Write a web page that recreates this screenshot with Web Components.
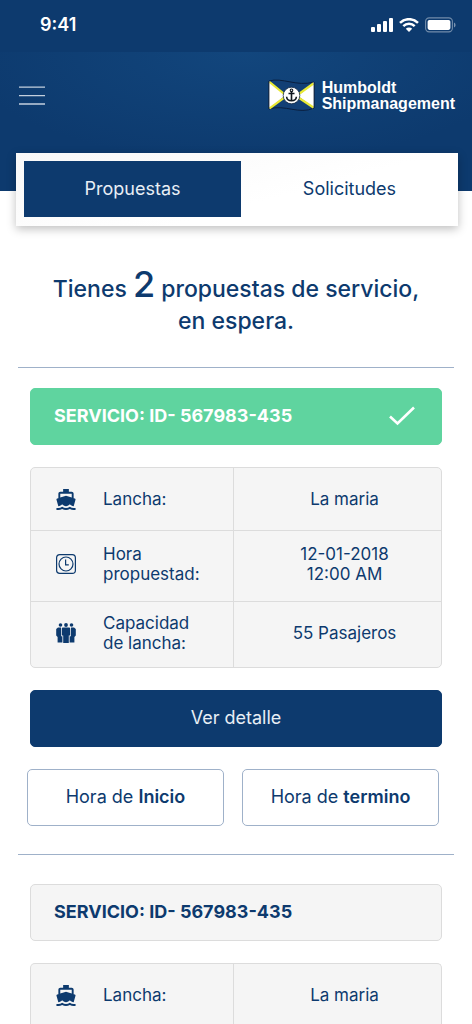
<!DOCTYPE html>
<html lang="es">
<head>
<meta charset="utf-8">
<meta name="viewport" content="width=device-width, initial-scale=1">
<title>Humboldt Shipmanagement</title>
<style>
  :root {
    --navy: #0d3a6e;
    --green: #5fd49f;
    --panel: #f5f5f5;
    --line: #dcdcdc;
    --outline: #9fb1c9;
  }
  html { height: 100%; overflow: hidden; }
  body {
    margin: 0;
    background: #fff;
    color: var(--navy);
    font: 18px/20px Inter, "Noto Sans", sans-serif;
  }
</style>
</head>
<body>
<service-app>
  <status-bar slot="top" time="9:41"></status-bar>
  <app-header slot="top"></app-header>
  <tab-switch>
    <tab-button selected>Propuestas</tab-button>
    <tab-button>Solicitudes</tab-button>
  </tab-switch>
  <pending-title count="2"></pending-title>
  <service-card>
    <service-id code="567983-435" accepted></service-id>
    <service-details lancha="La maria" hora="12-01-2018|12:00 AM" capacidad="55 Pasajeros"></service-details>
    <action-button primary>Ver detalle</action-button>
    <button-pair>
      <action-button>Hora de <b>Inicio</b></action-button>
      <action-button>Hora de <b>termino</b></action-button>
    </button-pair>
  </service-card>
  <service-card roomy>
    <service-id code="567983-435"></service-id>
    <service-details lancha="La maria" continued></service-details>
  </service-card>
</service-app>

<script>
  const define = (name, html, setup) => {
    const template = document.createElement('template');
    template.innerHTML = html;
    customElements.define(name, class extends HTMLElement {
      constructor() {
        super();
        this.attachShadow({ mode: 'open' }).append(template.content.cloneNode(true));
      }
      connectedCallback() {
        if (setup) setup(this, this.shadowRoot);
      }
    });
  };

  define('service-app', `
    <style>
      :host { display: block; }
      .top {
        background: radial-gradient(ellipse 60% 110px at 52% 0, #12467d, transparent) 0 52px no-repeat, var(--navy);
        height: 191px;
        margin-bottom: -38px;
      }
    </style>
    <div class="top"><slot name="top"></slot></div>
    <main><slot></slot></main>`);

  define('status-bar', `
    <style>
      :host {
        display: flex; justify-content: space-between; align-items: center;
        box-sizing: border-box; height: 52px; padding: 0 16px 2px 40px; color: #fff;
        font: 600 18px/20px Inter, sans-serif;
      }
      .signs { display: flex; align-items: center; gap: 6px; }
      svg { display: block; }
    </style>
    <span class="time"></span>
    <span class="signs">
      <svg width="22" height="14" viewBox="0 0 22 14" fill="#fff"><rect y="9" width="4" height="5" rx="1"/><rect x="6" y="6" width="4" height="8" rx="1"/><rect x="12" y="3" width="4" height="11" rx="1"/><rect x="18" width="4" height="14" rx="1"/></svg>
      <svg width="20" height="14" viewBox="0 0 20 14" fill="none" stroke="#fff" stroke-width="2.5"><path d="M1 4.9a12.7 12.7 0 0 1 18 0M4.3 8.2a8.1 8.1 0 0 1 11.4 0"/><path d="M6.8 10.8a4.6 4.6 0 0 1 6.4 0L10 14z" fill="#fff" stroke="none"/></svg>
      <svg width="31" height="16" viewBox="0 0 31 16"><rect x=".6" y=".9" width="26.8" height="14" rx="3.6" fill="none" stroke="#fff" stroke-opacity=".42" stroke-width="1.1"/><rect x="2.6" y="2.9" width="22.8" height="10" rx="1.8" fill="#fff"/><path d="M29 5.4v5q1.6-.8 1.6-2.5T29 5.4z" fill="#fff" opacity=".45"/></svg>
    </span>`,
    (host, root) => { root.querySelector('.time').textContent = host.getAttribute('time'); });

  define('app-header', `
    <style>
      :host { display: flex; justify-content: space-between; align-items: center; height: 88px; padding: 0 17px 0 19px; }
      button { width: 26px; height: 20px; padding: 0; border: 0; background: none; }
      svg { display: block; }
    </style>
    <button type="button" aria-label="Menú"><svg width="26" height="20" viewBox="0 0 26 20" stroke="#c3cfde" stroke-width="1.3"><path d="M0 1.2h26M0 9.6h26M0 18h26"/></svg></button>
    <brand-logo></brand-logo>`);

  define('brand-logo', `
    <style>
      :host { display: flex; align-items: center; gap: 7px; color: #fff; font: bold 16px/16px "Liberation Sans", Arial, sans-serif; }
      svg { display: block; }
      a { color: inherit; text-decoration: none; }
    </style>
    <svg width="47" height="34" viewBox="0 0 47 34">
      <path d="M1 2C14-2 29 8 46 3v26C31 36 17 25 1 30z" fill="#123f75" stroke="#0a1f3f"/>
      <path d="M1 2l16 14.500L1 30z" fill="#fff"/><path d="M46 3L30 17l16 12z" fill="#fff"/>
      <path d="M1.600 3l17 14L1.600 29.300M45.400 4.500L28 17l17.400 11.500" fill="none" stroke="#e9e934" stroke-width="2.200"/>
      <path d="M1 2v28M46 3v26" stroke="#1a2940" stroke-width=".8"/>
      <circle cx="23.500" cy="16.500" r="8.300" fill="#fff" stroke="#172b44" stroke-width=".8"/>
      <circle cx="23.500" cy="11.300" r="1.300" fill="none" stroke="#101820" stroke-width="1.100"/>
      <path d="M23.500 12.500v9.500M20.500 14.500h6M18.600 17.800c.4 5.300 9.400 5.300 9.800 0" fill="none" stroke="#101820" stroke-width="1.600"/>
    </svg>
    <a href="#">Humboldt<br>Shipmanagement</a>`);

  define('tab-switch', `
    <style>
      :host {
        display: grid; grid-template-columns: 1fr 1fr; position: relative;
        margin: 0 14px 0 16px; padding: 8px 0 9px 8px;
        background: linear-gradient(165deg, #f8f8f8, #fff 60%);
        box-shadow: 0 3px 9px rgba(0, 0, 0, .25);
      }
    </style>
    <slot></slot>`);

  define('tab-button', `
    <style>
      :host { display: block; }
      button { display: block; width: 100%; height: 56px; padding: 0; border: 0; background: none; color: var(--navy); font: inherit; }
      :host([selected]) button { background: var(--navy); color: #e8eef5; }
    </style>
    <button type="button"><slot></slot></button>`);

  define('pending-title', `
    <style>
      :host { display: block; padding: 42px 16px 2px; }
      h1 { margin: 0; font-size: 23px; line-height: 32px; font-weight: 500; text-align: center; }
      strong { font-size: 36px; line-height: 32px; font-weight: 500; }
    </style>
    <h1>Tienes <strong></strong> propuestas de servicio,<br>en espera.</h1>`,
    (host, root) => { root.querySelector('strong').textContent = host.getAttribute('count'); });

  define('service-card', `
    <style>
      :host { display: block; margin: 28px 18px 0; }
      hr { margin: 0; border: 0; border-top: 1px solid var(--outline); }
      .body { display: grid; gap: 22px; padding: 20px 12px 0; }
      :host([roomy]) .body { padding-top: 29px; }
    </style>
    <hr><section class="body"><slot></slot></section>`);

  define('service-id', `
    <style>
      :host { display: block; }
      h2 {
        display: flex; justify-content: space-between; align-items: center;
        box-sizing: border-box; height: 57px; margin: 0; padding: 0 26px 2px 23px;
        border: 1px solid var(--line); border-radius: 5px; background: var(--panel);
        font-size: 18px; line-height: 20px; font-weight: 700;
      }
      svg { display: none; }
      :host([accepted]) h2 { border-color: var(--green); background: var(--green); color: #fff; }
      :host([accepted]) svg { display: block; }
    </style>
    <h2><span></span><svg width="26" height="20" viewBox="0 0 26 20" fill="none" stroke="#fff" stroke-width="2.600"><path d="M1 10.500l7.500 7L25 1.500"/></svg></h2>`,
    (host, root) => { root.querySelector('span').textContent = 'SERVICIO: ID- ' + host.getAttribute('code'); });

  const icons = {
    boat: '<svg width="20" height="21" viewBox="2 1 20 22" fill="currentColor"><path d="M20 21c-1.390 0-2.780-.470-4-1.320-2.440 1.710-5.560 1.710-8 0C6.780 20.530 5.390 21 4 21H2v2h2c1.380 0 2.740-.350 4-.990 2.520 1.290 5.480 1.290 8 0 1.260.650 2.620.990 4 .990h2v-2h-2zM3.950 19H4c1.600 0 3.020-.880 4-2 .980 1.120 2.400 2 4 2s3.020-.880 4-2c.980 1.120 2.400 2 4 2h.050l1.890-6.680c.080-.260.060-.540-.060-.780s-.340-.420-.600-.500L20 10.620V6c0-1.100-.900-2-2-2h-3V1H9v3H6c-1.100 0-2 .900-2 2v4.620l-1.290.420c-.260.080-.480.260-.600.500s-.150.520-.060.780L3.950 19zM6 6h12v3.970L12 8 6 9.970V6z"/></svg>',
    clock: '<svg width="20" height="20" viewBox="0 0 20 20" fill="none" stroke="currentColor" stroke-width="1.200"><rect x=".6" y=".6" width="18.800" height="18.800" rx="3.200"/><circle cx="10" cy="10" r="7"/><path d="M9.600 5.600v5.200h3.200"/></svg>',
    people: '<svg width="20" height="20" viewBox="0 0 20 20" fill="currentColor"><circle cx="4.500" cy="2" r="1.800"/><circle cx="10" cy="2" r="1.900"/><circle cx="15.500" cy="2" r="1.800"/><path d="M7 4.400h6q1.200 0 1.200 1.200v7h-1.400V20H7.200v-7.400H5.800v-7Q5.800 4.400 7 4.400z"/><path d="M5 4.400H2L.2 6v6.600L1.600 14v5.400h4.800v-6.200H5.100zM15 4.400h3L19.800 6v6.600L18.400 14v5.400h-4.800v-6.200h1.300z"/></svg>'
  };

  define('service-details', `
    <style>
      :host { display: block; font-size: 17px; }
      table {
        width: 100%; table-layout: fixed; border-collapse: separate; border-spacing: 0;
        border: 1px solid var(--line); border-radius: 5px; background: var(--panel);
      }
      :host([continued]) table { border-radius: 5px 5px 0 0; border-bottom: 0; }
      th, td { box-sizing: border-box; height: 66px; padding: 0 0 4px; font-weight: 400; border-top: 1px solid var(--line); }
      tr:first-child > * { height: 62px; padding-bottom: 0; border-top: 0; }
      tr.tall > * { height: 71px; }
      th { width: 203px; text-align: left; border-right: 1px solid var(--line); }
      th div { display: grid; grid-template-columns: 20px 1fr; align-items: center; gap: 27px; padding-left: 25px; }
      td { padding-left: 14px; text-align: center; }
      svg { display: block; }
    </style>
    <table><tbody></tbody></table>`,
    (host, root) => {
      const rows = [
        ['lancha', 'boat', 'Lancha:', ''],
        ['hora', 'clock', 'Hora<br>propuestad:', 'tall'],
        ['capacidad', 'people', 'Capacidad<br>de lancha:', '']
      ];
      root.querySelector('tbody').innerHTML = rows
        .filter(([key]) => host.hasAttribute(key))
        .map(([key, icon, label, size]) => `<tr class="${size}"><th scope="row"><div>${icons[icon]}<span>${label}</span></div></th><td>${host.getAttribute(key).replace('|', '<br>')}</td></tr>`)
        .join('');
    });

  define('button-pair', `
    <style>:host { display: grid; grid-template-columns: 1fr 1fr; gap: 18px; margin: 0 3px 0 -3px; }</style>
    <slot></slot>`);

  define('action-button', `
    <style>
      :host { display: block; }
      button {
        display: block; width: 100%; height: 57px; padding: 0 0 2px;
        border: 1px solid var(--outline); border-radius: 5px;
        background: #fff; color: var(--navy); font: inherit;
      }
      :host([primary]) button { border-color: var(--navy); background: var(--navy); color: #e8eef5; }
      ::slotted(b) { font-weight: 600; }
    </style>
    <button type="button"><slot></slot></button>`);
</script>
</body>
</html>
